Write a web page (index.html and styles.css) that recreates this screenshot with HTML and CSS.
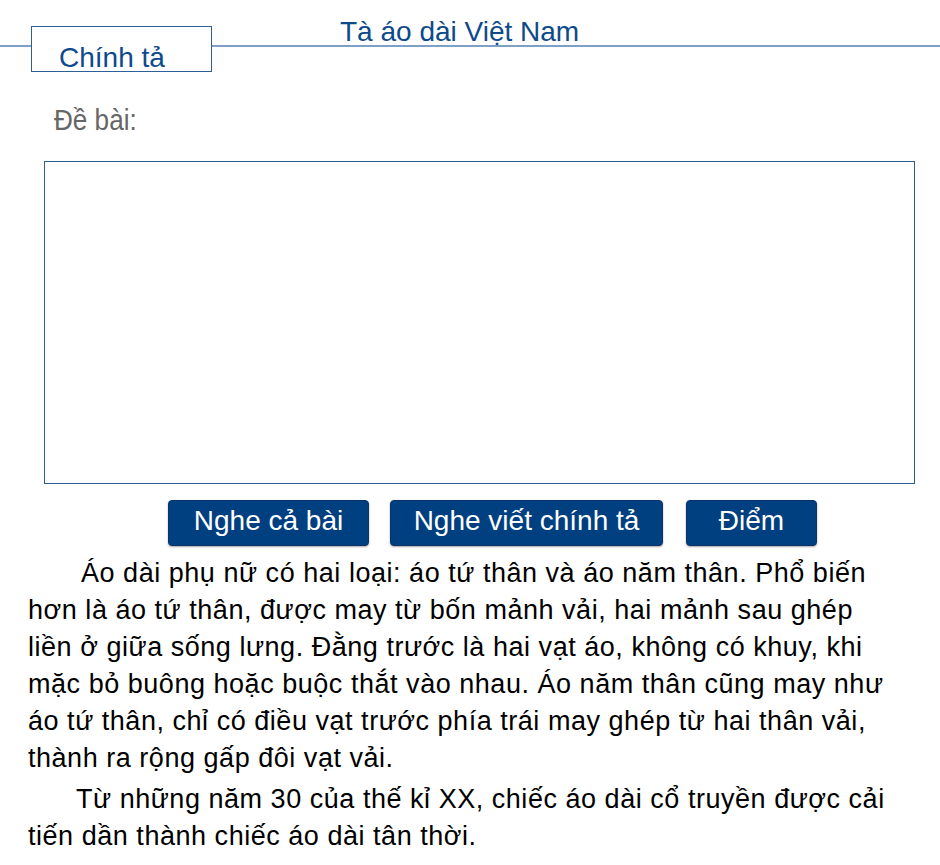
FILE: index.html
```html
<!DOCTYPE html>
<html lang="vi">
<head>
<meta charset="utf-8">
<title>Chính tả – Tà áo dài Việt Nam</title>
<link rel="stylesheet" href="styles.css">
</head>
<body>
  <header class="topbar">
    <div class="tab">Chính tả</div>
    <h1 class="title">Tà áo dài Việt Nam</h1>
  </header>

  <main class="lesson">
    <div class="prompt"><span class="prompt-text">Đề bài:</span></div>
    <textarea class="answer" aria-label="Bài viết"></textarea>

    <div class="actions">
      <button class="btn btn-all" type="button">Nghe cả bài</button>
      <button class="btn btn-dictate" type="button">Nghe viết chính tả</button>
      <button class="btn btn-score" type="button">Điểm</button>
    </div>

    <section class="passage">
      <p class="para para-first">Áo dài phụ nữ có hai loại: áo tứ thân và áo năm thân. Phổ biến hơn là áo tứ thân, được may từ bốn mảnh vải, hai mảnh sau ghép liền ở giữa sống lưng. Đằng trước là hai vạt áo, không có khuy, khi mặc bỏ buông hoặc buộc thắt vào nhau. Áo năm thân cũng may như áo tứ thân, chỉ có điều vạt trước phía trái may ghép từ hai thân vải, thành ra rộng gấp đôi vạt vải.</p>
      <p class="para para-second">Từ những năm 30 của thế kỉ XX, chiếc áo dài cổ truyền được cải tiến dần thành chiếc áo dài tân thời.</p>
    </section>
  </main>
</body>
</html>
```

FILE: styles.css
```css
html, body {
  margin: 0;
  padding: 0;
  background: #ffffff;
}

body {
  width: 940px;
  font-family: "Liberation Sans", Arial, sans-serif;
  color: #000;
}

/* Header: a thin rule runs across the page, the tab sits on top of it */
.topbar {
  display: flex;
  align-items: flex-start;
  height: 72px;
  background: linear-gradient(to bottom,
    transparent 45px, #7f9fc4 45px, #7f9fc4 47px, transparent 47px);
}

.tab {
  box-sizing: border-box;
  margin: 26px 0 0 31px;
  width: 181px;
  height: 46px;
  padding: 15px 0 0 27px;
  border: 1px solid #2f5f98;
  background: #fff;
  color: #0d4a8c;
  font-size: 28px;
  line-height: 31px;
}

.title {
  margin: 16px 0 0 128px;
  font-weight: normal;
  font-size: 28px;
  line-height: 32px;
  color: #0d4a8c;
}

/* "Đề bài:" label uses a narrow, tall rendering of the face */
.prompt {
  margin: 32px 0 0 54px;
  height: 32px;
  font-size: 30px;
  line-height: 32px;
  color: #666;
}

.prompt-text {
  display: inline-block;
  transform: scaleX(0.87);
  transform-origin: left center;
}

.answer {
  display: block;
  box-sizing: border-box;
  margin: 25px 0 0 44px;
  width: 871px;
  height: 323px;
  border: 1px solid #2a5d97;
  border-radius: 0;
  padding: 0;
  resize: none;
  outline: none;
  background: #fff;
}

.actions {
  display: flex;
  gap: 21px;
  margin: 16px 0 0 168px;
}

.btn {
  box-sizing: border-box;
  height: 46px;
  padding: 0 0 4px;
  border: 1px solid #08346a;
  border-radius: 4px;
  background: #003f80;
  color: #fff;
  font-family: inherit;
  font-size: 28px;
  line-height: 36px;
  box-shadow: 0 1px 2px rgba(0, 0, 0, 0.35);
  cursor: pointer;
}

.btn-all { width: 201px; }
.btn-dictate { width: 273px; }
.btn-score { width: 131px; margin-left: 2px; }

.passage {
  margin: 9px 0 0 28px;
  width: 868px;
}

.para {
  margin: 0;
  font-size: 27px;
  letter-spacing: 0.53px;
  line-height: 37px;
}

.para-first { text-indent: 53px; }
.para-second { text-indent: 48px; margin-top: 4px; }
```
